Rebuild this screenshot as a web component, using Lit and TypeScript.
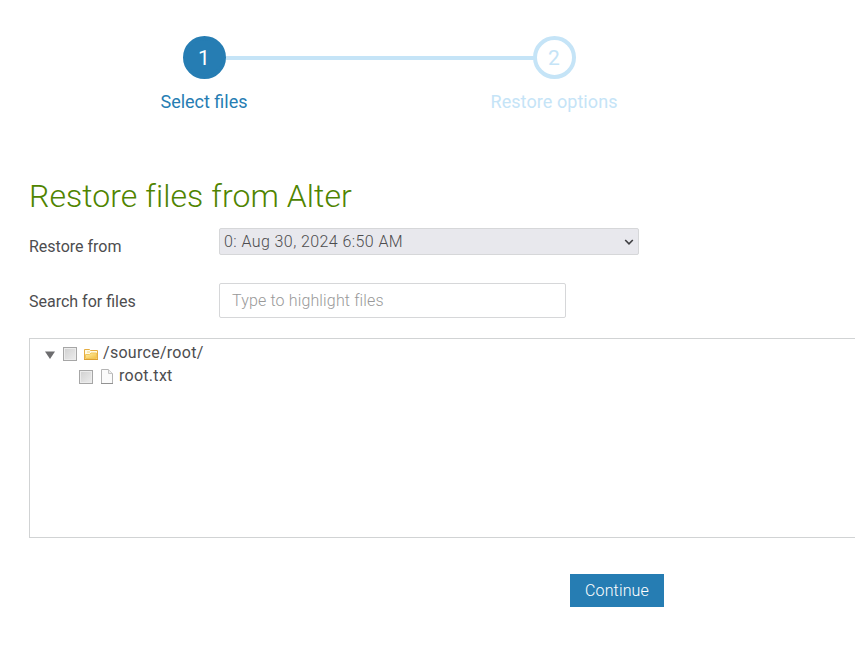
import { LitElement, html, css } from "lit";
import { customElement } from "lit/decorators.js";

@customElement("app-root")
class AppRoot extends LitElement {
  static styles = css`
    :host {
      display: block;
      width: 855px;
      height: 666px;
      overflow: hidden;
      background: #fff;
      color: #4d4d4f;
      font: 400 16px/23px Roboto, "Noto Sans", sans-serif;
    }
    * { box-sizing: border-box; }
    .t { display: inline-block; white-space: pre; }
    .steps { display: flex; padding: 36px 0 0 129px; height: 175px; }
    .step { width: 150px; display: flex; flex-direction: column; align-items: center; color: #267db3; font-size: 18px; }
    .step.next { color: #c5e4f7; }
    .dot { width: 43px; height: 43px; border-radius: 50%; border: 4px solid #267db3; background: #267db3; color: #fff; display: flex; align-items: center; justify-content: center; font-size: 21px; font-weight: 400; padding-top: 1px; }
    .next .dot { border-color: #c5e4f7; background: #fff; color: #c5e4f7; }
    .name { margin-top: 11px; white-space: pre; }
    .line { width: 308px; height: 4px; margin: 20px -55px 0 -53px; background: #c5e4f7; flex: none; }
    h1 { margin: 0; padding-left: 29px; height: 53px; font-size: 32px; line-height: 42px; font-weight: 300; color: #4f8400; }
    .row { display: grid; grid-template-columns: 190px auto; padding-left: 29px; justify-content: start; height: 55px; }
    .row label { padding-top: 7px; }
    .select { width: 420px; height: 27px; border: 1px solid #d6d7d9; border-radius: 2px; background: #e8e8ed; padding: 0 4px; display: flex; align-items: center; justify-content: space-between; font-weight: 350; }
    .search { width: 347px; height: 35px; border: 1px solid #d6d7d9; border-radius: 2px; padding: 0 12px; display: flex; align-items: center; color: #999; font-weight: 300; }
    .tree { margin-left: 29px; height: 200px; border: 1px solid #d1d3d4; border-right: 0; padding: 2px 0 0 15px; }
    .node { height: 23px; display: flex; align-items: center; }
    .node svg { flex: none; margin-top: 3px; }
    .node .arrow { margin: 4px 8px 0 0; }
    .node .doc { margin-top: 2px; }
    .box { width: 14px; height: 14px; border: 1px solid #a6a6a6; background: linear-gradient(135deg, #d0d0d0, #ededed); box-shadow: inset 0 0 0 1px #ececec; margin: 3px 7px 0 0; }
    .child { padding-left: 34px; }
    .actions { padding: 36px 0 0 570px; }
    button { width: 94px; height: 33px; padding: 0; border: 0; background: #267db3; color: #fff; font: 300 16px/33px Roboto, sans-serif; }
    .name-b { letter-spacing: .07px; }
    .title { letter-spacing: .06px; }
    .label { letter-spacing: 0; }
    .value { letter-spacing: .42px; }
    .hint { letter-spacing: .15px; }
    .path { letter-spacing: .28px; }
  `;

  render() {
    return html`
      <div class="steps">
        <div class="step"><div class="dot">1</div><div class="name">Select files</div></div>
        <div class="line"></div>
        <div class="step next"><div class="dot">2</div><div class="name"><span class="t name-b">Restore options</span></div></div>
      </div>
      <h1><span class="t title">Restore files from Alter</span></h1>
      <div class="row">
        <label><span class="t label">Restore from</span></label>
        <div class="select"><span class="t value">0: Aug 30, 2024 6:50 AM</span>
          <svg width="10" height="8" viewBox="0 0 10 8"><path d="M1.200 2 5 5.800 8.800 2" fill="none" stroke="#3f3f42" stroke-width="1.600"/></svg>
        </div>
      </div>
      <div class="row">
        <label><span class="t label">Search for files</span></label>
        <div class="search"><span class="t hint">Type to highlight files</span></div>
      </div>
      <div class="tree">
        <div class="node">
          <svg class="arrow" width="10" height="8" viewBox="0 0 10 8"><path d="M0 .5h10L5 8z" fill="#6d6d6f"/></svg>
          <span class="box"></span>
          ${this.folder()}
          <span class="t path">/source/root/</span>
        </div>
        <div class="node child">
          <span class="box"></span>
          ${this.file()}
          <span class="t path">root.txt</span>
        </div>
      </div>
      <div class="actions"><button><span class="t hint">Continue</span></button></div>
    `;
  }

  folder() {
    return html`<svg width="19" height="16" viewBox="0 0 19 16">
      <defs><linearGradient id="f" x1="0" y1="0" x2="1" y2="1"><stop offset="0" stop-color="#fff0a8"/><stop offset="1" stop-color="#f3c044"/></linearGradient></defs>
      <path d="M.5 13.500v-10h5l1 1h7v9z" fill="#fffbe6" stroke="#e5ad42"/>
      <path d="M1.500 12.500V8.500h4L7 7h5.500v5.500z" fill="url(#f)" stroke="#f1c65a"/>
      <path d="M3 6h3" stroke="#f3d27a"/>
      <path d="M0 13.500h14" stroke="#dca032"/>
    </svg>`;
  }

  file() {
    return html`<svg class="doc" width="19" height="16" viewBox="0 0 19 16">
      <path d="M1.500 .5h7l4 4v10h-11z" fill="#fbfbfb" stroke="#b4b4b4"/>
      <path d="M8.500 .5v4h4" fill="#eee" stroke="#c4c4c4"/>
      <path d="M1 14.500h12" stroke="#929292"/>
    </svg>`;
  }
}
